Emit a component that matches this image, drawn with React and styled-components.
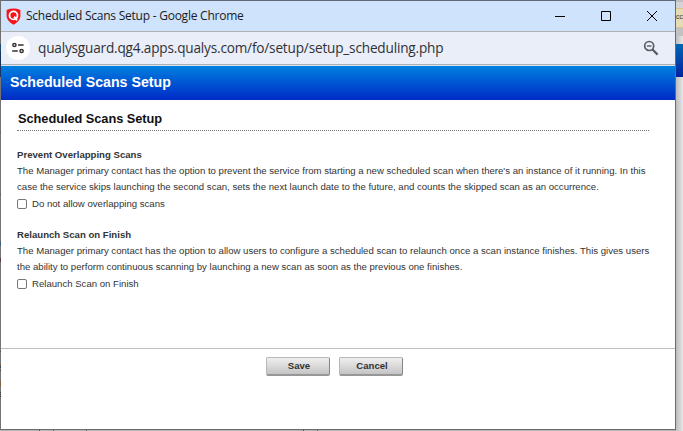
import React from 'react';
import styled, { createGlobalStyle } from 'styled-components';

const Global = createGlobalStyle`
  * { box-sizing: border-box; }
  html, body { margin: 0; padding: 0; overflow: hidden; }
  body { font-family: "Liberation Sans", Arial, sans-serif; background: #ececec; }
`;

/* The page behind the popup shows as a 1px sliver on the left and at the bottom. */
const Desktop = styled.div`
  display: flex;
  width: 683px;
  height: 431px;
  padding-left: 1px;
  background:
    linear-gradient(#6f6f6f 0 16px, #86715f 16px 17px, #6f6f6f 17px 44px, #1c4a6e 44px 52px, #17335f 52px 77px,
      #747474 77px 132px, #555 132px 133px, #747474 133px 194px, #555 194px 195px, #747474 195px 241px,
      #3f5f7c 241px 246px, #747474 246px 258px, #5a4048 258px 262px, #747474 262px 351px, #555 351px 352px,
      #747474 352px 364px, #7d5c3c 364px 366px, #2f4a60 366px 368px, #747474 368px 370px, #2f4a60 370px 371px,
      #747474 371px 381px, #7d6040 381px 386px, #747474 386px 392px, #3c3c3c 392px 393px, #747474 393px 394px,
      #3c3c3c 394px 395px, #747474 395px 396px, #3c3c3c 396px 397px, #747474 397px) 0 0 / 1px 430px no-repeat,
    linear-gradient(90deg, #b4b4b4 0 39px, #2c6088 39px 40px, #b8b8b8 40px 53px, #666 53px 54px, #b8b8b8 54px 86px,
      #666 86px 87px, #b4b4b4 87px 303px, #24508a 303px 304px, #b4b4b4 304px 317px, #666 317px 318px, #b4b4b4 318px);
`;

const Popup = styled.main`
  display: flex;
  flex-direction: column;
  width: 675px;
  height: 430px;
  border: 1px solid #6b6b6b;
  border-left: 0;
  border-top-color: #636a75;
  background: #fff;
`;

const Backdrop = styled.aside`
  flex: 1;
  display: flex;
  flex-direction: column;
  height: 431px;
  overflow: hidden;
  background: linear-gradient(90deg, #bdbdbd, #e6e6e6);
`;

const Strip = styled.div`
  height: ${(p) => p.$h}px;
  flex: none;
  background: ${(p) => p.$bg || 'transparent'};
`;

const Notice = styled(Strip)`
  border-top: 1px solid #d8c48c;
  border-bottom: 1px solid #d8c48c;
  font-size: 7px;
  line-height: 16px;
  color: #333;
`;

const TitleBar = styled.header`
  display: flex;
  align-items: center;
  height: 31px;
  flex: none;
  padding-left: 5px;
  background: #cfe3fc;
  border-bottom: 1px solid #b0b0b0;
`;

const WindowTitle = styled.span`
  flex: 1;
  margin-left: 5px;
  font: 12px/16px "Open Sans", "Noto Sans", sans-serif;
  letter-spacing: -0.24px;
  color: #1b1b1b;
  white-space: nowrap;
`;

const Controls = styled.div`
  display: flex;
  width: 138px;
`;

const Control = styled.span`
  display: flex;
  justify-content: center;
  width: 46px;
`;

const AddressBar = styled.div`
  display: flex;
  align-items: center;
  height: 33px;
  flex: none;
  padding: 0 16px 0 5px;
  background: #e9eef8;
  border-bottom: 1px solid #b0b0b0;
`;

const SiteButton = styled.span`
  display: flex;
  align-items: center;
  justify-content: center;
  width: 24px;
  height: 24px;
  border-radius: 50%;
  background: #fff;
`;

const Url = styled.span`
  flex: 1;
  margin-left: 8px;
  font: 13.6px/20px "Open Sans", "Noto Sans", sans-serif;
  letter-spacing: -0.18px;
  color: #303136;
  white-space: nowrap;
`;

const Banner = styled.div`
  height: 35px;
  flex: none;
  padding-left: 9px;
  border-top: 1px solid #d5e6f5;
  background: linear-gradient(#0080df, #002bc6);
  color: #fff;
  font: bold 14.2px/32px "Liberation Sans", Arial, sans-serif;
`;

const Content = styled.section`
  height: 248px;
  flex: none;
  padding: 9px 26px 0 16px;
`;

const Heading = styled.h1`
  height: 22px;
  margin: 0 0 16px;
  padding-left: 1px;
  border-bottom: 1px dotted #777;
  font: bold 12.8px/20px "Liberation Sans", Arial, sans-serif;
  letter-spacing: -0.05px;
  color: #111;
`;

const Option = styled.div`
  height: 80px;
  color: #333;
`;

const Line = styled.div`
  height: 16px;
  font-size: 9.6px;
  line-height: 16px;
  font-weight: ${(p) => (p.$bold ? 'bold' : 'normal')};
  white-space: nowrap;
`;

const CheckRow = styled.label`
  display: flex;
  align-items: center;
  gap: 5px;
  height: 17px;
`;

const Check = styled.input`
  appearance: none;
  width: 10px;
  height: 10px;
  margin: 0;
  border: 1px solid #777;
  border-radius: 2px;
  background: #fff;
`;

const Footer = styled.footer`
  display: flex;
  justify-content: center;
  gap: 9px;
  padding: 8px 7px 0 0;
  border-top: 1px solid #bdbdbd;
`;

const Button = styled.button`
  width: 64px;
  height: 19px;
  padding: 0 0 0 2px;
  border: 1px solid #b8b8b8;
  border-right: 1px solid #858585;
  border-bottom: 2px solid #979797;
  border-radius: 2px;
  background: linear-gradient(#efefef, #c4c4c4);
  color: #333;
  font: bold 9.6px/16px "Liberation Sans", Arial, sans-serif;
`;

const Shield = () => (
  <svg width="15" height="17" viewBox="0 0 15 17">
    <path d="M.6 2Q7.5-.8 14.4 2V8.5Q13.6 13.4 7.5 16.8Q1.4 13.4 .6 8.5Z" fill="#f5141c" />
    <circle cx="7.5" cy="7.4" r="4" fill="none" stroke="#fff" strokeWidth="1.8" />
    <path d="M8.2 8.6L11 12.4" stroke="#fff" strokeWidth="1.8" />
  </svg>
);

const Tune = () => (
  <svg width="14" height="14" viewBox="0 0 14 14" fill="none" stroke="#333" strokeWidth="1.5">
    <circle cx="3.4" cy="4" r="1.6" />
    <path d="M7 4H12.6M1.2 10H6.8" />
    <circle cx="10.6" cy="10" r="1.6" />
  </svg>
);

const ZoomOut = () => (
  <svg width="16" height="16" viewBox="0 0 16 16" fill="none" stroke="#5a5c60" strokeWidth="1.7">
    <circle cx="6.2" cy="6" r="4.5" />
    <path d="M9.5 9.5L14.6 14.6" strokeWidth="2.2" />
    <path d="M4 6H8.4" strokeWidth="1.4" />
  </svg>
);

const Glyph = ({ d }) => (
  <svg width="12" height="12" viewBox="0 0 12 12" fill="none" stroke="#000">
    <path d={d} />
  </svg>
);

const options = [
  {
    title: 'Prevent Overlapping Scans',
    lines: [
      "The Manager primary contact has the option to prevent the service from starting a new scheduled scan when there's an instance of it running. In this",
      'case the service skips launching the second scan, sets the next launch date to the future, and counts the skipped scan as an occurrence.',
    ],
    label: 'Do not allow overlapping scans',
  },
  {
    title: 'Relaunch Scan on Finish',
    lines: [
      'The Manager primary contact has the option to allow users to configure a scheduled scan to relaunch once a scan instance finishes. This gives users',
      'the ability to perform continuous scanning by launching a new scan as soon as the previous one finishes.',
    ],
    label: 'Relaunch Scan on Finish',
  },
];

export default function App() {
  return (
    <>
      <Global />
      <Desktop>
        <Popup>
          <TitleBar>
            <Shield />
            <WindowTitle>Scheduled Scans Setup - Google Chrome</WindowTitle>
            <Controls>
              <Control><Glyph d="M1 6.5H11" /></Control>
              <Control><Glyph d="M1.5 1.5H10.5V10.5H1.5Z" /></Control>
              <Control><Glyph d="M1 1L11 11M11 1L1 11" /></Control>
            </Controls>
          </TitleBar>
          <AddressBar>
            <SiteButton><Tune /></SiteButton>
            <Url>qualysguard.qg4.apps.qualys.com/fo/setup/setup_scheduling.php</Url>
            <ZoomOut />
          </AddressBar>
          <Banner>Scheduled Scans Setup</Banner>
          <Content>
            <Heading>Scheduled Scans Setup</Heading>
            {options.map((o) => (
              <Option key={o.title}>
                <Line $bold>{o.title}</Line>
                {o.lines.map((text) => <Line key={text}>{text}</Line>)}
                <CheckRow>
                  <Check type="checkbox" />
                  <Line as="span">{o.label}</Line>
                </CheckRow>
              </Option>
            ))}
          </Content>
          <Footer>
            <Button>Save</Button>
            <Button>Cancel</Button>
          </Footer>
        </Popup>
        <Backdrop>
          <Strip $h={2} $bg="#c0c0c0" />
          <Strip $h={6} $bg="#d4d4d4" />
          <Notice $h={20} $bg="#e3dcb4">cc</Notice>
          <Strip $h={8} $bg="#c2c2c2" />
          <Strip $h={8} />
          <Strip $h={33} $bg="linear-gradient(#0068b4, #0022a0)" />
        </Backdrop>
      </Desktop>
    </>
  );
}
